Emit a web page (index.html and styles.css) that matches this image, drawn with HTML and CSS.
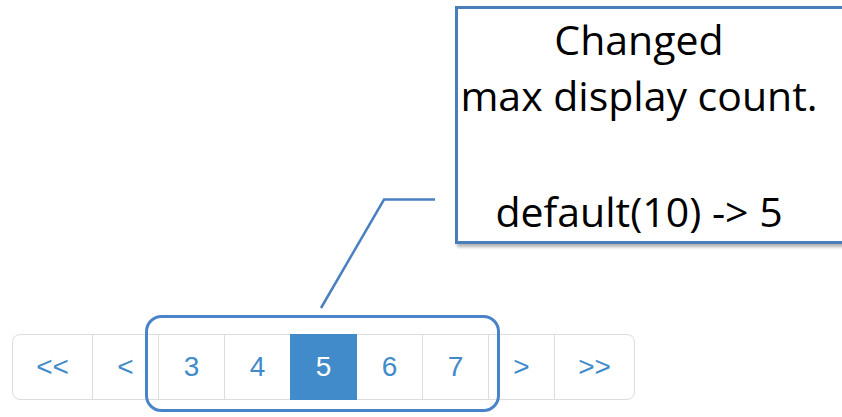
FILE: index.html
```html
<!DOCTYPE html>
<html lang="en">
<head>
    <meta charset="UTF-8">
    <title>Pagination max display count</title>
    <link rel="stylesheet" href="styles.css">
</head>
<body>
    <div class="note">
        <div class="note-text">
            <p>Changed</p>
            <p>max display count.</p>
            <p class="gap">default(10) -&gt; 5</p>
        </div>
    </div>

    <ul class="pager">
        <li class="wide"><a href="#">&lt;&lt;</a></li>
        <li><a href="#">&lt;</a></li>
        <li><a href="#">3</a></li>
        <li><a href="#">4</a></li>
        <li class="active"><a href="#">5</a></li>
        <li><a href="#">6</a></li>
        <li><a href="#">7</a></li>
        <li><a href="#">&gt;</a></li>
        <li class="wide"><a href="#">&gt;&gt;</a></li>
    </ul>

    <!-- callout connector + highlight round the page numbers -->
    <svg class="marks" width="842" height="417" viewBox="0 0 842 417">
        <polyline points="321,308 384,199.5 435,199.5" fill="none" stroke="#4a80c2" stroke-width="2.5"/>
        <rect x="146.5" y="316.5" width="352" height="94" rx="15" fill="none" stroke="#4a84c8" stroke-width="3"/>
    </svg>
</body>
</html>
```

FILE: styles.css
```css
body {
    margin: 0;
    width: 842px;
    height: 417px;
    position: relative;
    overflow: hidden;
    background: #fff;
}
.note {
    box-sizing: border-box;
    margin: 6px 0 0 455px;
    width: 420px;
    height: 238px;
    border: 3px solid #4a7ebb;
    background: #fff;
    box-shadow: 2px 3px 3px rgba(0, 0, 0, .3);
}
.note-text {
    width: 362px;
    text-align: center;
    white-space: nowrap;
    font-family: "Open Sans", Lato, sans-serif;
    font-size: 41px;
    line-height: 56px;
    color: #000;
    padding-top: 2px;
}
.note-text p {
    margin: 0;
}
.note-text .gap {
    margin-top: 60px;
}
.pager {
    display: flex;
    list-style: none;
    margin: 90px 0 0 12px;
    padding: 0;
    font-family: "Liberation Sans", Arial, sans-serif;
    font-size: 28px;
    line-height: 40px;
}
.pager li + li {
    margin-left: -1px;
}
.pager a {
    display: block;
    box-sizing: border-box;
    width: 67px;
    padding: 12px 0;
    text-align: center;
    border: 1px solid #ddd;
    color: #428bca;
    text-decoration: none;
    background: #fff;
}
.pager .wide a {
    width: 81px;
}
.pager li:first-child a {
    border-radius: 8px 0 0 8px;
}
.pager li:last-child a {
    border-radius: 0 8px 8px 0;
}
.pager .active a {
    position: relative;
    background: #428bca;
    border-color: #428bca;
    color: #fff;
}
.marks {
    position: absolute;
    left: 0;
    top: 0;
    pointer-events: none;
}
```
